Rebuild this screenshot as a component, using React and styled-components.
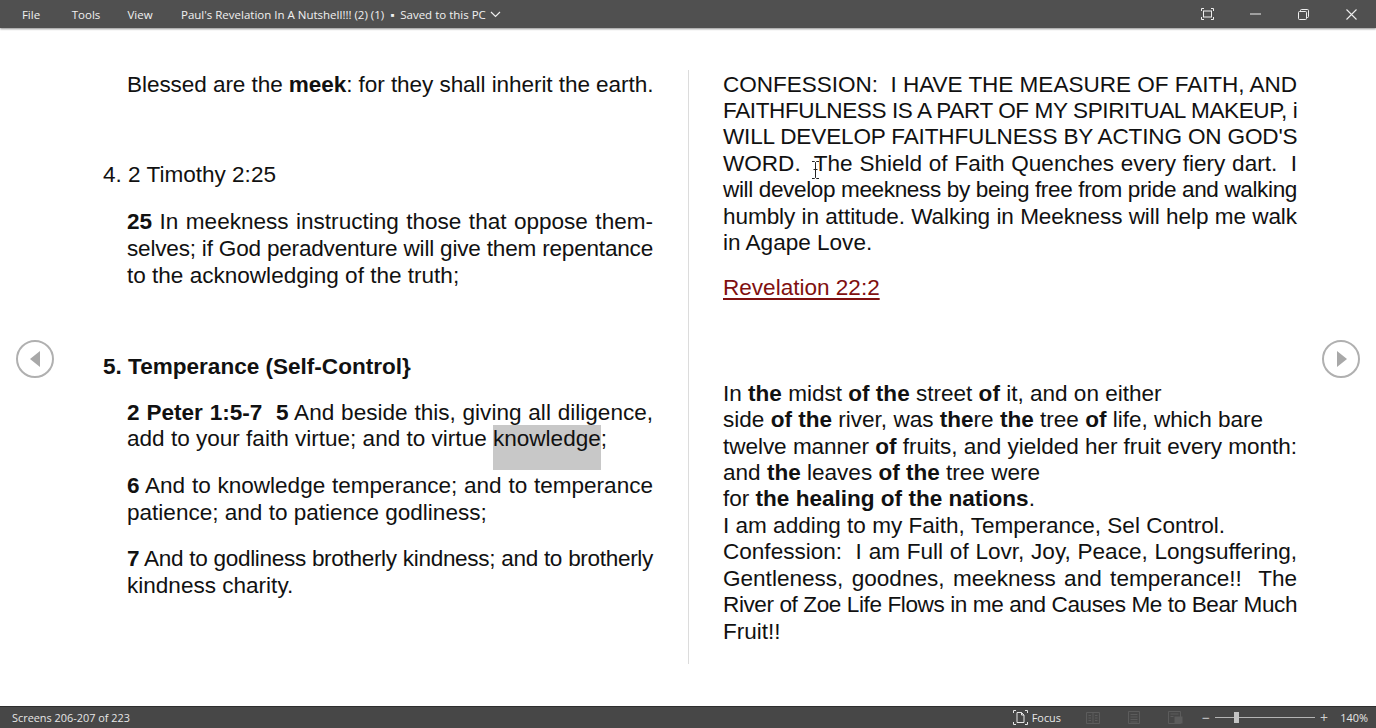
import React from "react";
import styled, { createGlobalStyle } from "styled-components";

const GlobalStyle = createGlobalStyle`
  html, body { margin: 0; padding: 0; height: 100%; overflow: hidden; background: #fff; }
  #root { height: 100%; }
`;

const Page = styled.div`
  position: relative;
  width: 1376px;
  height: 728px;
  display: flex;
  flex-direction: column;
  overflow: hidden;
  background: #fff;
`;

const TitleBar = styled.header`
  height: 28px;
  flex: none;
  display: flex;
  align-items: center;
  background: #505050;
  box-shadow: 0 1px 2px rgba(0, 0, 0, 0.45);
  color: #f0f0f0;
  font: 11.5px "Open Sans", sans-serif;
  z-index: 1;
`;

const MenuItem = styled.span`
  width: ${(p) => p.$width}px;
  text-align: center;
`;

const DocTitle = styled.span`
  margin-left: 11px;
  display: flex;
  align-items: center;
  gap: 4px;
  white-space: nowrap;
`;

const WindowControls = styled.div`
  margin-left: auto;
  padding-right: 1px;
  display: flex;
  align-items: center;
`;

const WindowButton = styled.span`
  width: 48px;
  height: 28px;
  display: flex;
  align-items: center;
  justify-content: center;
`;

const Reader = styled.main`
  flex: 1;
  display: flex;
  padding-top: 42px;
`;

const LeftPage = styled.section`
  width: 586px;
  margin-left: 103px;
  height: 594px;
  box-sizing: border-box;
  border-right: 1px solid #dcdcdc;
  padding: 2px 35px 0 0;
`;

const RightPage = styled.section`
  width: 574px;
  margin-left: 34px;
  padding-top: 1.6px;
`;

const Para = styled.div`
  margin-top: ${(p) => p.$top || 0}px;
  margin-left: ${(p) => (p.$indent ? 24 : 0)}px;
  color: #111;
  font: 22.55px/${(p) => p.$lh || 26.4}px "Liberation Sans", Arial, sans-serif;
`;

const Line = styled.div`
  white-space: nowrap;
  letter-spacing: ${(p) => p.$tight || 0}px;
  text-align: ${(p) => (p.$just ? "justify" : "left")};
  text-align-last: ${(p) => (p.$just ? "justify" : "left")};
`;

const Link = styled.span`
  color: #7f1010;
  text-decoration: underline;
  text-underline-offset: 3px;
`;

const Highlight = styled.span`
  position: relative;
  z-index: 0;
  &::before {
    content: "";
    position: absolute;
    z-index: -1;
    left: 0;
    right: 0;
    top: -1px;
    bottom: -19px;
    background: #c8c8c8;
  }
`;

const NavButton = styled.button`
  position: absolute;
  top: 340px;
  ${(p) => (p.$side === "left" ? "left: 16px;" : "right: 16px;")}
  width: 38px;
  height: 38px;
  padding: 0;
  border: 2.5px solid #b0b0b0;
  border-radius: 50%;
  background: #fff;
  display: flex;
  align-items: center;
  justify-content: center;
`;

const TextCursor = styled.svg`
  position: absolute;
  left: 811px;
  top: 161px;
`;

const StatusBar = styled.footer`
  height: 21px;
  flex: none;
  display: flex;
  align-items: center;
  padding-left: 12px;
  background: #474747;
  border-top: 1px solid #2e2e2e;
  color: #e6e6e6;
  font: 10.9px "Open Sans", sans-serif;
`;

const StatusRight = styled.div`
  margin-left: auto;
  display: flex;
  align-items: center;
`;

const FocusButton = styled.span`
  display: flex;
  align-items: center;
  gap: 4px;
  margin-right: 25px;
`;

const ViewIcon = styled.svg`
  margin-right: ${(p) => p.$gap}px;
`;

const ZoomSlider = styled.div`
  position: relative;
  width: 100px;
  height: 1px;
  margin: 0 5px;
  background: #b5b5b5;
`;

const ZoomThumb = styled.span`
  position: absolute;
  left: 19px;
  top: -5px;
  width: 5px;
  height: 11px;
  background: #c4c4c4;
`;

const ZoomLabel = styled.span`
  width: 28px;
  margin: 0 8px 0 12px;
  text-align: right;
`;

const ZoomSign = styled.span`
  font-size: 14px;
  line-height: 14px;
  color: #d0d0d0;
`;

export default function App() {
  return (
    <Page>
      <GlobalStyle />
      <TitleBar>
        <MenuItem $width={62}>File</MenuItem>
        <MenuItem $width={48}>Tools</MenuItem>
        <MenuItem $width={60}>View</MenuItem>
        <DocTitle>
          Paul's Revelation In A Nutshell!!! (2) (1)&nbsp;&nbsp;▪&nbsp;&nbsp;Saved to this PC
          <svg width="11" height="7" viewBox="0 0 11 7" fill="none" stroke="#eee" strokeWidth="1.2">
            <path d="M1 1l4.5 4.5L10 1" />
          </svg>
        </DocTitle>
        <WindowControls>
          <WindowButton>
            <svg width="13" height="12" viewBox="0 0 13 12" fill="none" stroke="#eee">
              <path d="M.5 3V.5H3M10 .5h2.5V3M12.5 9v2.5H10M3 11.5H.5V9" />
              <rect x="2.5" y="3" width="8" height="6" />
            </svg>
          </WindowButton>
          <WindowButton>
            <svg width="11" height="2" viewBox="0 0 11 2" stroke="#eee">
              <path d="M0 1h11" />
            </svg>
          </WindowButton>
          <WindowButton>
            <svg width="11" height="11" viewBox="0 0 11 11" fill="none" stroke="#eee">
              <rect x=".5" y="2.5" width="8" height="8" rx="1" />
              <path d="M2.5 2.5v-1a1 1 0 0 1 1-1h6a1 1 0 0 1 1 1v6a1 1 0 0 1-1 1h-1" />
            </svg>
          </WindowButton>
          <WindowButton>
            <svg width="11" height="11" viewBox="0 0 11 11" stroke="#eee" strokeWidth="1.1">
              <path d="M.5.5l10 10M10.5.5l-10 10" />
            </svg>
          </WindowButton>
        </WindowControls>
      </TitleBar>

      <Reader>
        <LeftPage>
          <Para $indent>
            <Line $just $tight={-0.07}>Blessed are the <b>meek</b>: for they shall inherit the earth.</Line>
          </Para>
          <Para $top={64}>
            <Line>4. 2 Timothy 2:25</Line>
          </Para>
          <Para $indent $top={19} $lh={27}>
            <Line $just><b>25</b> In meekness instructing those that oppose them-</Line>
            <Line $just $tight={-0.2}>selves; if God peradventure will give them repentance</Line>
            <Line>to the acknowledging of the truth;</Line>
          </Para>
          <Para $top={65}>
            <Line><b>5. Temperance (Self-Control}</b></Line>
          </Para>
          <Para $indent $top={20} $lh={26}>
            <Line $just><b>2 Peter 1:5-7&nbsp; 5</b> And beside this, giving all diligence,</Line>
            <Line>add to your faith virtue; and to virtue <Highlight>knowledge</Highlight>;</Line>
          </Para>
          <Para $indent $top={20} $lh={27}>
            <Line $just><b>6</b> And to knowledge temperance; and to temperance</Line>
            <Line>patience; and to patience godliness;</Line>
          </Para>
          <Para $indent $top={19} $lh={27}>
            <Line $just $tight={-0.32}><b>7</b> And to godliness brotherly kindness; and to brotherly</Line>
            <Line>kindness charity.</Line>
          </Para>
        </LeftPage>

        <RightPage>
          <Para>
            <Line $just $tight={-0.03}>CONFESSION:&nbsp; I HAVE THE MEASURE OF FAITH, AND</Line>
            <Line $just $tight={-0.4}>FAITHFULNESS IS A PART OF MY SPIRITUAL MAKEUP, i</Line>
            <Line $just $tight={-0.16}>WILL DEVELOP FAITHFULNESS BY ACTING ON GOD'S</Line>
            <Line $just>WORD.&nbsp; The Shield of Faith Quenches every fiery dart.&nbsp; I</Line>
            <Line $just $tight={-0.37}>will develop meekness by being free from pride and walking</Line>
            <Line $just $tight={-0.07}>humbly in attitude. Walking in Meekness will help me walk</Line>
            <Line>in Agape Love.</Line>
          </Para>
          <Para $top={19}>
            <Line><Link>Revelation 22:2</Link></Line>
          </Para>
          <Para $top={79}>
            <Line>In <b>the</b> midst <b>of the</b> street <b>of</b> it, and on either</Line>
            <Line>side <b>of the</b> river, was <b>the</b>re <b>the</b> tree <b>of</b> life, which bare</Line>
            <Line $just $tight={-0.05}>twelve manner <b>of</b> fruits, and yielded her fruit every month:</Line>
            <Line>and <b>the</b> leaves <b>of the</b> tree were</Line>
            <Line>for <b>the healing of the nations</b>.</Line>
            <Line>I am adding to my Faith, Temperance, Sel Control.</Line>
            <Line $just>Confession:&nbsp; I am Full of Lovr, Joy, Peace, Longsuffering,</Line>
            <Line $just>Gentleness, goodnes, meekness and temperance!!&nbsp; The</Line>
            <Line $just $tight={-0.4}>River of Zoe Life Flows in me and Causes Me to Bear Much</Line>
            <Line>Fruit!!</Line>
          </Para>
        </RightPage>
      </Reader>

      <NavButton $side="left" aria-label="Previous">
        <svg width="11" height="16" viewBox="0 0 11 16" fill="#a8a8a8">
          <path d="M10 0v16L0 8z" />
        </svg>
      </NavButton>
      <NavButton $side="right" aria-label="Next">
        <svg width="11" height="16" viewBox="0 0 11 16" fill="#a8a8a8">
          <path d="M1 0v16l10-8z" />
        </svg>
      </NavButton>

      <TextCursor width="9" height="18" viewBox="0 0 9 18" fill="none" stroke="#222">
        <path d="M1 .5h2.5l1 1 1-1H8M4.5 1.5v15M1 17.5h2.5l1-1 1 1H8M2.5 8.5h4" />
      </TextCursor>

      <StatusBar>
        Screens 206-207 of 223
        <StatusRight>
          <FocusButton>
            <svg width="15" height="15" viewBox="0 0 15 15" fill="none" stroke="#e6e6e6">
              <path d="M.5 3V.5H3M12 .5h2.5V3M14.5 12v2.5H12M3 14.5H.5V12" />
              <path d="M4 2.5h4.5L11 5v7.5H4zM8.5 2.5V5H11" />
            </svg>
            Focus
          </FocusButton>
          <ViewIcon $gap={28} width="14" height="12" viewBox="0 0 14 12" fill="none" stroke="#5c5c5c">
            <path d="M.5.5h13v11H.5zM7 .5v11M2.5 3.5h2.500M2.5 6h2.500M2.5 8.500h2.500M9 3.500h2.500M9 6h2.500M9 8.500h2.500" />
          </ViewIcon>
          <ViewIcon $gap={28} width="12" height="13" viewBox="0 0 12 13" fill="none" stroke="#5c5c5c">
            <path d="M.5.5h11v12H.5zM2.5 3.5h7M2.5 6h7M2.5 8.500h7M2.5 11h7" />
          </ViewIcon>
          <ViewIcon $gap={19} width="15" height="13" viewBox="0 0 15 13" fill="none" stroke="#5c5c5c">
            <path d="M.5.5h12v12H.5zM2.500 3h8M2.500 5.500h3" />
            <rect x="7" y="6" width="7" height="6" fill="#5c5c5c" />
          </ViewIcon>
          <ZoomSign>−</ZoomSign>
          <ZoomSlider>
            <ZoomThumb />
          </ZoomSlider>
          <ZoomSign>+</ZoomSign>
          <ZoomLabel>140%</ZoomLabel>
        </StatusRight>
      </StatusBar>
    </Page>
  );
}
